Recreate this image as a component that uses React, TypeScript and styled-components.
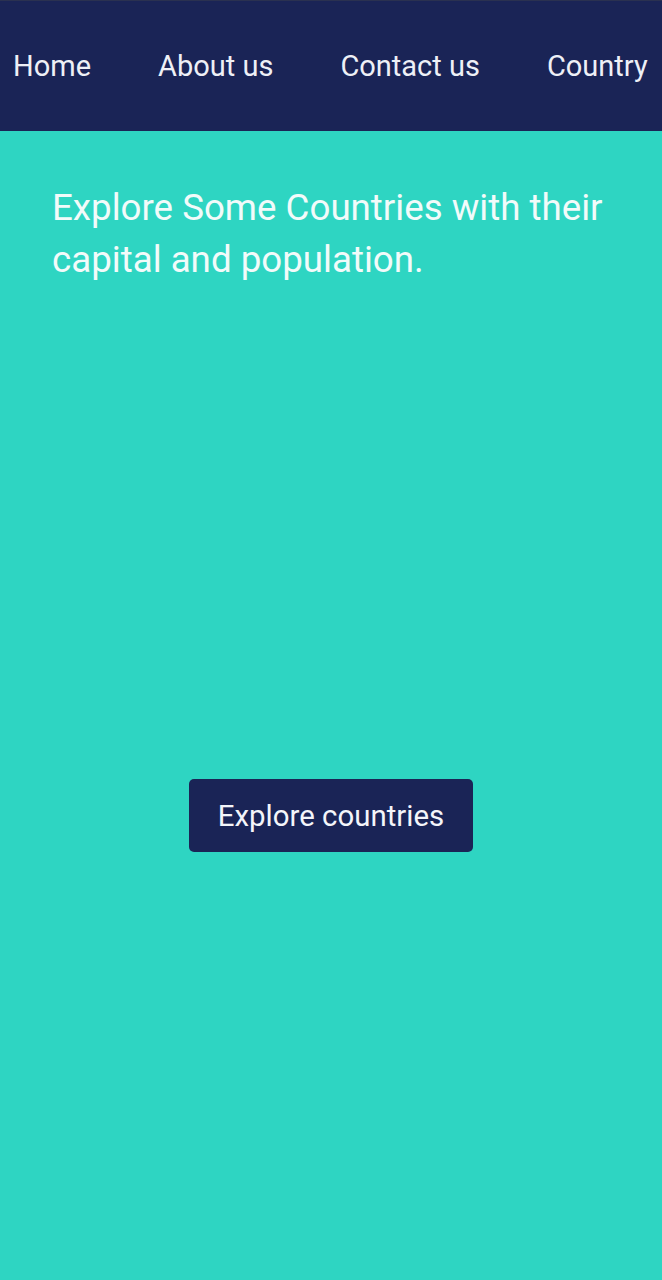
import React from "react";
import styled, { createGlobalStyle } from "styled-components";

const GlobalStyle = createGlobalStyle`
  html, body {
    margin: 0;
    padding: 0;
    background: #2ed5c2;
  }
  body {
    font-family: Roboto, "Noto Sans", sans-serif;
  }
`;

const Page = styled.div`
  width: 662px;
  min-height: 1280px;
  background: #2ed5c2;
  display: flex;
  flex-direction: column;
`;

const NavBar = styled.nav`
  height: 131px;
  background: #1a2456;
  border-top: 1px solid #2a3150;
  box-sizing: border-box;
  display: flex;
  align-items: center;
  padding-left: 13px;
  gap: 67px;
  white-space: nowrap;
  overflow: hidden;
`;

const NavLink = styled.a`
  color: #eef0f6;
  font-size: 29px;
  font-weight: 400;
  text-decoration: none;
  line-height: 1;
  padding-top: 1px;
`;

const Heading = styled.h1`
  margin: 0;
  padding: 51px 30px 0 52px;
  color: #f2fbfa;
  font-size: 36.7px;
  font-weight: 400;
  line-height: 52px;
`;

const ButtonRow = styled.div`
  display: flex;
  justify-content: center;
  padding-top: 493px;
`;

const ExploreButton = styled.button`
  width: 284px;
  height: 73px;
  background: #1a2456;
  color: #f4f5fa;
  border: none;
  border-radius: 5px;
  font-family: Roboto, "Noto Sans", sans-serif;
  font-size: 29.4px;
  font-weight: 400;
  cursor: pointer;
`;

export default function App() {
  return (
    <>
      <GlobalStyle />
      <Page>
        <NavBar>
          <NavLink href="#">Home</NavLink>
          <NavLink href="#">About us</NavLink>
          <NavLink href="#">Contact us</NavLink>
          <NavLink href="#">Country</NavLink>
        </NavBar>
        <Heading>Explore Some Countries with their capital and population.</Heading>
        <ButtonRow>
          <ExploreButton>Explore countries</ExploreButton>
        </ButtonRow>
      </Page>
    </>
  );
}
